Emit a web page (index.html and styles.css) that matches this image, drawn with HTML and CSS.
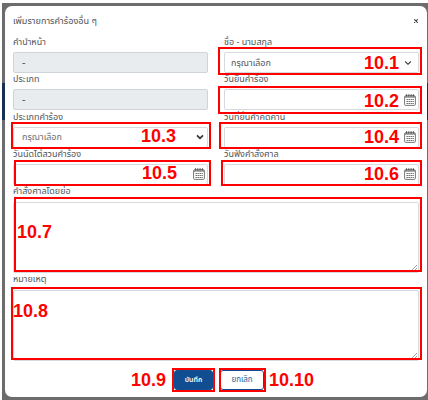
FILE: index.html
```html
<!DOCTYPE html>
<html lang="th">
<head>
<meta charset="utf-8">
<title>เพิ่มรายการคำร้องอื่น ๆ</title>
<link rel="stylesheet" href="styles.css">
</head>
<body>
<svg class="defs" width="0" height="0"><defs>
<symbol id="cal" viewBox="0 0 12 12"><rect x=".6" y="1.7" width="10.8" height="9.7" rx="1.2" fill="#fff" stroke="#777"/><path d="M1 3h10M2.500 .3v2M4.800 .3v2M7.100 .3v2M9.400 .3v2" stroke="#555" stroke-width="1.1"/><path d="M2.500 5.500h7.300M2.500 7.500h7.300M2.500 9.500h7.300" stroke="#666" stroke-width="1.1" stroke-dasharray="1.4 .6"/></symbol>
</defs></svg>
<div class="backdrop">
<main class="modal">
<header class="head"><h1>เพิ่มรายการคำร้องอื่น ๆ</h1><svg class="close" viewBox="0 0 4 4"><path d="M.2 .2l3.600 3.600M3.800 .2l-3.600 3.600"/></svg></header>
<div class="grid">
<div class="field"><label>คำนำหน้า</label><div class="input off">-</div></div>
<div class="field"><label>ชื่อ - นามสกุล</label><div class="input pick">กรุณาเลือก<svg class="chev thin" viewBox="0 0 8 6"><path d="M1.200 1.500L4 4.300l2.800-2.800"/></svg></div></div>
<div class="field"><label>ประเภท</label><div class="input off">-</div></div>
<div class="field"><label>วันยื่นคำร้อง</label><div class="input"><svg class="cal"><use href="#cal"/></svg></div></div>
<div class="field"><label>ประเภทคำร้อง</label><div class="input soft">กรุณาเลือก<svg class="chev" viewBox="0 0 8 6"><path d="M1 1.300L4 4.300l3-3"/></svg></div></div>
<div class="field"><label>วันที่ยื่นคำคัดค้าน</label><div class="input"><svg class="cal"><use href="#cal"/></svg></div></div>
<div class="field"><label>วันนัดไต่สวนคำร้อง</label><div class="input"><svg class="cal left"><use href="#cal"/></svg></div></div>
<div class="field"><label>วันฟังคำสั่งศาล</label><div class="input"><svg class="cal"><use href="#cal"/></svg></div></div>
</div>
<div class="field area"><label>คำสั่งศาลโดยย่อ</label><div class="text"><svg class="grip" viewBox="0 0 6 6"><path d="M0 6L6 0M3 6l3-3"/></svg></div></div>
<div class="field area"><label>หมายเหตุ</label><div class="text"><svg class="grip" viewBox="0 0 6 6"><path d="M0 6L6 0M3 6l3-3"/></svg></div></div>
<footer class="actions"><button class="save">บันทึก</button><button class="cancel">ยกเลิก</button></footer>
</main>
</div>
<div class="mark m1"><b>10.1</b></div>
<div class="mark m2"><b>10.2</b></div>
<div class="mark m3"><b>10.3</b></div>
<div class="mark m4"><b>10.4</b></div>
<div class="mark m5"><b>10.5</b></div>
<div class="mark m6"><b>10.6</b></div>
<div class="mark m7"><b>10.7</b></div>
<div class="mark m8"><b>10.8</b></div>
<div class="mark m9"><b>10.9</b></div>
<div class="mark m10"><b>10.10</b></div>
</body>
</html>
```
FILE: styles.css
```css
* { box-sizing: border-box; }
body { margin: 0; width: 428px; height: 400px; overflow: hidden; background: #fff; padding: 3px 0 0 2px; font: 9px/12px "Noto Sans Thai", "Noto Sans", sans-serif; color: #505459; }
.defs { position: absolute; }
.backdrop { height: 397px; padding: 3px 1px 3px 3px; background: linear-gradient(#6c6c6c 80px, #17304f 80px, #17304f 117px, #6c6c6c 117px); }
.modal { height: 391px; background: #fff; border-radius: 7px; padding: 8px 8px 0; }
.head { display: flex; justify-content: space-between; align-items: center; height: 14px; padding-right: 1px; }
h1 { margin: 0; font-size: 9.100px; font-weight: 400; white-space: nowrap; }
.close { width: 4px; height: 4px; fill: none; stroke: #444; stroke-width: 1.1; }
.grid { display: grid; grid-template-columns: 195px 195px; column-gap: 16px; padding-top: 8px; }
.field { height: 37.300px; }
label { display: block; height: 16px; line-height: 12px; white-space: nowrap; }
.input { display: flex; align-items: center; justify-content: space-between; height: 21px; padding: 0 4px 0 8px; border: 1px solid #d5dade; border-radius: 2px; background: #fff; white-space: nowrap; }
.pick { padding-left: 6px; }
.off { background: #e9ecef; border-color: #ced4da; font-size: 11px; }
.soft { color: #686d72; }
.chev { width: 8px; height: 6px; fill: none; stroke: #30343a; stroke-width: 1.700; margin-right: -1px; }
.thin { stroke-width: 1.1; margin-right: 2px; }
.cal { width: 12px; height: 12px; margin-left: auto; margin-right: -2px; }
.left { margin-right: -2px; }
.area { height: 88px; width: 406px; }
.text { display: flex; justify-content: flex-end; align-items: flex-end; height: 71px; padding: 1px; border: 1px solid #d5dade; border-radius: 2px; }
.area label { height: 17px; }
.grip { width: 6px; height: 6px; stroke: #888; stroke-width: .8; }
.actions { display: flex; gap: 7px; padding: 8.800px 0 0 161px; }
button { height: 20px; padding: 0; border: 1px solid #104e91; border-radius: 3px; font: 7px/16px "Noto Sans Thai", "Noto Sans", sans-serif; }
.save { width: 39px; background: #104e91; color: #fff; font-weight: 600; }
.cancel { width: 44px; background: #fff; color: #2861a0; font-size: 8px; }
.mark { position: absolute; border: 2px solid #f00; color: #f00; }
.mark b { position: absolute; font: bold 18px/18px "Liberation Sans", Arial, sans-serif; white-space: nowrap; }
.m1 { left: 218px; top: 47px; width: 204px; height: 28px; }
.m1 b { left: 144px; top: 5px; }
.m2 { left: 218px; top: 86px; width: 204px; height: 28px; }
.m2 b { left: 144px; top: 4px; }
.m3 { left: 11px; top: 122px; width: 200px; height: 27px; }
.m3 b { left: 128px; top: 3px; }
.m4 { left: 219px; top: 122px; width: 203px; height: 27px; }
.m4 b { left: 143px; top: 4px; }
.m5 { left: 14px; top: 160px; width: 197px; height: 26px; }
.m5 b { left: 126px; top: 2px; }
.m6 { left: 221px; top: 160px; width: 201px; height: 26px; }
.m6 b { left: 141px; top: 3px; }
.m7 { left: 14px; top: 197px; width: 408px; height: 75px; }
.m7 b { left: 1px; top: 24px; }
.m8 { left: 11px; top: 287px; width: 411px; height: 73px; }
.m8 b { left: 0; top: 13px; }
.m9 { left: 172px; top: 368px; width: 43px; height: 24px; }
.m9 b { left: -43px; top: 1px; }
.m10 { left: 219px; top: 368px; width: 47px; height: 24px; }
.m10 b { left: 48px; top: 1px; }
```
